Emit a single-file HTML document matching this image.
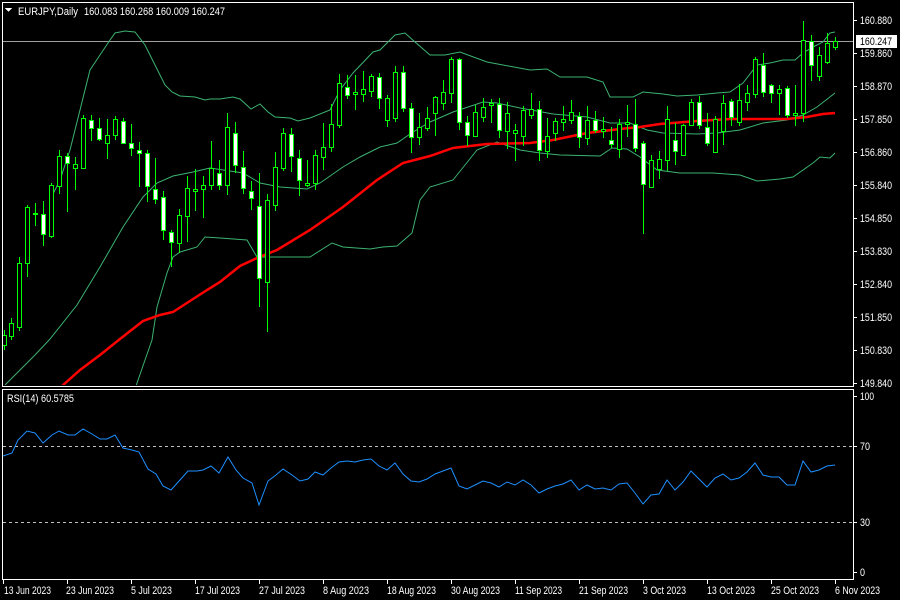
<!DOCTYPE html>
<html><head><meta charset="utf-8"><style>
html,body{margin:0;padding:0;background:#000;width:900px;height:600px;overflow:hidden}
svg{display:block}
text{font-family:"Liberation Sans",sans-serif;font-size:11px;fill:#fff}
.k line{stroke:#00ff00;stroke-width:1}
.k rect{stroke:#00ff00;stroke-width:1}
.b{fill:#000}.w{fill:#fff}
.bb{fill:none;stroke:#3cb371;stroke-width:1}
</style></head><body>
<svg width="900" height="600" viewBox="0 0 900 600" shape-rendering="crispEdges">
<defs><clipPath id="c"><rect x="3" y="3" width="850" height="382"/></clipPath>
<clipPath id="r"><rect x="3" y="390" width="850" height="188"/></clipPath></defs>
<rect x="2.5" y="2.5" width="851" height="384" fill="none" stroke="#fff"/>
<rect x="2.5" y="389.5" width="851" height="190" fill="none" stroke="#fff"/>
<g clip-path="url(#c)" shape-rendering="auto">
<line x1="3" y1="41.5" x2="853" y2="41.5" stroke="#a0a0a0"/>
<polyline class="bb" points="50,200 60,180 70,150 80,110 90,70 100,55 110,40 115,33 125,31 135,32 145,45 155,65 165,85 172,92 180,96 195,97 205,100 210,99 220,99 233,97 240,99 251,109 260,104 268,112 275,117 290,118 298,121 310,118 330,110 340,90 353,73 373,52 380,50 395,35 405,33 415,42 430,55 445,55 460,52 487,62 530,70 547,69 560,77 587,77 603,82 610,97 633,97 643,92 663,94 677,96 697,95 717,93 730,92 743,83 757,65 770,63 783,60 795,60 803,53 813,47 823,42 830,33 835,32"/>
<polyline class="bb" points="5,385 20,370 35,355 50,339 77,305 100,267 123,227 143,197 157,183 173,176 193,172 210,168 243,173 260,183 280,187 307,189 320,183 343,167 360,157 380,147 397,143 413,132 430,122 453,112 483,102 497,103 520,108 553,114 587,117 610,123 630,123 647,130 663,133 697,134 717,133 740,130 763,123 787,120 803,115 817,107 835,93"/>
<polyline class="bb" points="136,386 145,360 152,340 157,307 167,273 173,257 180,252 197,247 205,237 220,238 247,240 257,257 273,257 310,257 332,243 343,247 370,249 383,247 397,246 412,233 420,200 430,187 453,180 477,150 497,142 520,150 540,153 560,155 600,156 612,148 627,149 640,157 657,170 680,173 713,173 740,175 757,181 780,179 793,177 813,163 820,157 830,158 835,153"/>
<polyline fill="none" stroke="#ff0000" stroke-width="2.5" points="62,386 80,370 100,355 120,339 143,321 160,315 173,312 190,301 207,290 220,282 240,266 257,258 277,250 310,230 343,207 377,180 403,163 430,156 453,148 487,144 530,143 553,140 587,133 620,129 640,127 660,124 697,121 730,119 787,119 807,117 823,114 835,113"/>
</g>
<g class="k" clip-path="url(#c)">
<line x1="4.5" y1="330" x2="4.5" y2="350"/><rect x="2.5" y="335.5" width="4" height="10" class="b"/>
<line x1="11.5" y1="318" x2="11.5" y2="340"/><rect x="9.5" y="323.5" width="4" height="13" class="b"/>
<line x1="19.5" y1="257" x2="19.5" y2="331"/><rect x="17.5" y="263.5" width="4" height="64" class="b"/>
<line x1="27.5" y1="205" x2="27.5" y2="277"/><rect x="25.5" y="207.5" width="4" height="56" class="b"/>
<line x1="35.5" y1="203" x2="35.5" y2="226"/><rect x="33.5" y="213.5" width="4" height="1" class="b"/>
<line x1="43.5" y1="201" x2="43.5" y2="246"/><rect x="41.5" y="214.5" width="4" height="20" class="w"/>
<line x1="51.5" y1="183" x2="51.5" y2="238"/><rect x="49.5" y="185.5" width="4" height="51" class="b"/>
<line x1="59.5" y1="150" x2="59.5" y2="194"/><rect x="57.5" y="156.5" width="4" height="30" class="b"/>
<line x1="67.5" y1="153" x2="67.5" y2="212"/><rect x="65.5" y="156.5" width="4" height="7" class="w"/>
<line x1="75.5" y1="157" x2="75.5" y2="190"/><rect x="73.5" y="164.5" width="4" height="4" class="b"/>
<line x1="83.5" y1="115" x2="83.5" y2="168"/><rect x="81.5" y="118.5" width="4" height="50" class="b"/>
<line x1="91.5" y1="115" x2="91.5" y2="141"/><rect x="89.5" y="120.5" width="4" height="8" class="w"/>
<line x1="99.5" y1="118" x2="99.5" y2="141"/><rect x="97.5" y="128.5" width="4" height="11" class="w"/>
<line x1="107.5" y1="119" x2="107.5" y2="159"/><rect x="105.5" y="135.5" width="4" height="8" class="b"/>
<line x1="115.5" y1="116" x2="115.5" y2="140"/><rect x="113.5" y="119.5" width="4" height="16" class="b"/>
<line x1="123.5" y1="118" x2="123.5" y2="144"/><rect x="121.5" y="121.5" width="4" height="22" class="w"/>
<line x1="131.5" y1="124" x2="131.5" y2="156"/><rect x="129.5" y="143.5" width="4" height="5" class="w"/>
<line x1="139.5" y1="142" x2="139.5" y2="187"/><rect x="137.5" y="150.5" width="4" height="3" class="w"/>
<line x1="147.5" y1="150" x2="147.5" y2="202"/><rect x="145.5" y="153.5" width="4" height="33" class="w"/>
<line x1="155.5" y1="158" x2="155.5" y2="204"/><rect x="153.5" y="189.5" width="4" height="10" class="w"/>
<line x1="163.5" y1="191" x2="163.5" y2="240"/><rect x="161.5" y="197.5" width="4" height="33" class="w"/>
<line x1="171.5" y1="230" x2="171.5" y2="267"/><rect x="169.5" y="232.5" width="4" height="10" class="w"/>
<line x1="179.5" y1="209" x2="179.5" y2="253"/><rect x="177.5" y="215.5" width="4" height="28" class="b"/>
<line x1="187.5" y1="176" x2="187.5" y2="242"/><rect x="185.5" y="188.5" width="4" height="28" class="b"/>
<line x1="195.5" y1="169" x2="195.5" y2="211"/><rect x="193.5" y="189.5" width="4" height="2" class="b"/>
<line x1="203.5" y1="176" x2="203.5" y2="218"/><rect x="201.5" y="185.5" width="4" height="4" class="b"/>
<line x1="211.5" y1="141" x2="211.5" y2="190"/><rect x="209.5" y="168.5" width="4" height="17" class="b"/>
<line x1="219.5" y1="160" x2="219.5" y2="190"/><rect x="217.5" y="173.5" width="4" height="12" class="w"/>
<line x1="227.5" y1="113" x2="227.5" y2="195"/><rect x="225.5" y="127.5" width="4" height="58" class="b"/>
<line x1="235.5" y1="122" x2="235.5" y2="173"/><rect x="233.5" y="133.5" width="4" height="32" class="w"/>
<line x1="243.5" y1="151" x2="243.5" y2="194"/><rect x="241.5" y="167.5" width="4" height="21" class="w"/>
<line x1="251.5" y1="181" x2="251.5" y2="210"/><rect x="249.5" y="191.5" width="4" height="7" class="w"/>
<line x1="259.5" y1="173" x2="259.5" y2="307"/><rect x="257.5" y="206.5" width="4" height="72" class="w"/>
<line x1="267.5" y1="194" x2="267.5" y2="332"/><rect x="265.5" y="200.5" width="4" height="82" class="b"/>
<line x1="275.5" y1="152" x2="275.5" y2="211"/><rect x="273.5" y="167.5" width="4" height="38" class="b"/>
<line x1="283.5" y1="128" x2="283.5" y2="171"/><rect x="281.5" y="133.5" width="4" height="35" class="b"/>
<line x1="291.5" y1="128" x2="291.5" y2="172"/><rect x="289.5" y="134.5" width="4" height="22" class="w"/>
<line x1="299.5" y1="150" x2="299.5" y2="196"/><rect x="297.5" y="158.5" width="4" height="22" class="w"/>
<line x1="307.5" y1="160" x2="307.5" y2="187"/><rect x="305.5" y="183.5" width="4" height="2" class="b"/>
<line x1="315.5" y1="150" x2="315.5" y2="190"/><rect x="313.5" y="155.5" width="4" height="28" class="b"/>
<line x1="323.5" y1="123" x2="323.5" y2="170"/><rect x="321.5" y="147.5" width="4" height="10" class="b"/>
<line x1="331.5" y1="104" x2="331.5" y2="152"/><rect x="329.5" y="124.5" width="4" height="23" class="b"/>
<line x1="339.5" y1="74" x2="339.5" y2="128"/><rect x="337.5" y="83.5" width="4" height="42" class="b"/>
<line x1="347.5" y1="75" x2="347.5" y2="99"/><rect x="345.5" y="87.5" width="4" height="8" class="w"/>
<line x1="355.5" y1="75" x2="355.5" y2="110"/><rect x="353.5" y="92.5" width="4" height="2" class="b"/>
<line x1="363.5" y1="71" x2="363.5" y2="102"/><rect x="361.5" y="89.5" width="4" height="5" class="b"/>
<line x1="371.5" y1="74" x2="371.5" y2="97"/><rect x="369.5" y="76.5" width="4" height="15" class="b"/>
<line x1="379.5" y1="73" x2="379.5" y2="109"/><rect x="377.5" y="77.5" width="4" height="21" class="w"/>
<line x1="387.5" y1="95" x2="387.5" y2="127"/><rect x="385.5" y="98.5" width="4" height="22" class="b"/>
<line x1="395.5" y1="66" x2="395.5" y2="122"/><rect x="393.5" y="72.5" width="4" height="46" class="b"/>
<line x1="403.5" y1="66" x2="403.5" y2="112"/><rect x="401.5" y="72.5" width="4" height="36" class="w"/>
<line x1="411.5" y1="103" x2="411.5" y2="153"/><rect x="409.5" y="108.5" width="4" height="29" class="w"/>
<line x1="419.5" y1="113" x2="419.5" y2="145"/><rect x="417.5" y="127.5" width="4" height="10" class="b"/>
<line x1="427.5" y1="107" x2="427.5" y2="131"/><rect x="425.5" y="118.5" width="4" height="10" class="b"/>
<line x1="435.5" y1="96" x2="435.5" y2="136"/><rect x="433.5" y="97.5" width="4" height="16" class="b"/>
<line x1="443.5" y1="80" x2="443.5" y2="110"/><rect x="441.5" y="92.5" width="4" height="11" class="b"/>
<line x1="451.5" y1="57" x2="451.5" y2="103"/><rect x="449.5" y="59.5" width="4" height="34" class="b"/>
<line x1="459.5" y1="58" x2="459.5" y2="130"/><rect x="457.5" y="59.5" width="4" height="63" class="w"/>
<line x1="467.5" y1="116" x2="467.5" y2="146"/><rect x="465.5" y="122.5" width="4" height="13" class="w"/>
<line x1="475.5" y1="105" x2="475.5" y2="137"/><rect x="473.5" y="112.5" width="4" height="24" class="b"/>
<line x1="483.5" y1="98" x2="483.5" y2="122"/><rect x="481.5" y="107.5" width="4" height="10" class="b"/>
<line x1="491.5" y1="99" x2="491.5" y2="123"/><rect x="489.5" y="103.5" width="4" height="2" class="b"/>
<line x1="499.5" y1="98" x2="499.5" y2="138"/><rect x="497.5" y="104.5" width="4" height="26" class="w"/>
<line x1="507.5" y1="102" x2="507.5" y2="149"/><rect x="505.5" y="113.5" width="4" height="18" class="b"/>
<line x1="515.5" y1="124" x2="515.5" y2="161"/><rect x="513.5" y="130.5" width="4" height="3" class="b"/>
<line x1="523.5" y1="106" x2="523.5" y2="146"/><rect x="521.5" y="110.5" width="4" height="26" class="b"/>
<line x1="531.5" y1="93" x2="531.5" y2="119"/><rect x="529.5" y="109.5" width="4" height="6" class="b"/>
<line x1="539.5" y1="101" x2="539.5" y2="161"/><rect x="537.5" y="109.5" width="4" height="41" class="w"/>
<line x1="547.5" y1="118" x2="547.5" y2="158"/><rect x="545.5" y="136.5" width="4" height="15" class="b"/>
<line x1="555.5" y1="118" x2="555.5" y2="141"/><rect x="553.5" y="121.5" width="4" height="12" class="b"/>
<line x1="563.5" y1="106" x2="563.5" y2="131"/><rect x="561.5" y="119.5" width="4" height="3" class="b"/>
<line x1="571.5" y1="100" x2="571.5" y2="124"/><rect x="569.5" y="112.5" width="4" height="8" class="b"/>
<line x1="579.5" y1="112" x2="579.5" y2="148"/><rect x="577.5" y="116.5" width="4" height="21" class="w"/>
<line x1="587.5" y1="106" x2="587.5" y2="145"/><rect x="585.5" y="120.5" width="4" height="18" class="b"/>
<line x1="595.5" y1="111" x2="595.5" y2="133"/><rect x="593.5" y="120.5" width="4" height="10" class="w"/>
<line x1="603.5" y1="117" x2="603.5" y2="138"/><rect x="601.5" y="129.5" width="4" height="2" class="b"/>
<line x1="611.5" y1="127" x2="611.5" y2="148"/><rect x="609.5" y="140.5" width="4" height="4" class="w"/>
<line x1="619.5" y1="119" x2="619.5" y2="158"/><rect x="617.5" y="124.5" width="4" height="25" class="b"/>
<line x1="627.5" y1="105" x2="627.5" y2="137"/><rect x="625.5" y="122.5" width="4" height="2" class="b"/>
<line x1="635.5" y1="99" x2="635.5" y2="152"/><rect x="633.5" y="124.5" width="4" height="24" class="w"/>
<line x1="643.5" y1="141" x2="643.5" y2="234"/><rect x="641.5" y="143.5" width="4" height="41" class="w"/>
<line x1="651.5" y1="155" x2="651.5" y2="187"/><rect x="649.5" y="160.5" width="4" height="27" class="b"/>
<line x1="659.5" y1="151" x2="659.5" y2="179"/><rect x="657.5" y="159.5" width="4" height="10" class="b"/>
<line x1="667.5" y1="106" x2="667.5" y2="171"/><rect x="665.5" y="119.5" width="4" height="41" class="b"/>
<line x1="675.5" y1="123" x2="675.5" y2="165"/><rect x="673.5" y="140.5" width="4" height="11" class="w"/>
<line x1="683.5" y1="124" x2="683.5" y2="156"/><rect x="681.5" y="125.5" width="4" height="30" class="b"/>
<line x1="691.5" y1="99" x2="691.5" y2="126"/><rect x="689.5" y="102.5" width="4" height="23" class="b"/>
<line x1="699.5" y1="96" x2="699.5" y2="129"/><rect x="697.5" y="102.5" width="4" height="23" class="w"/>
<line x1="707.5" y1="113" x2="707.5" y2="146"/><rect x="705.5" y="127.5" width="4" height="16" class="w"/>
<line x1="715.5" y1="116" x2="715.5" y2="153"/><rect x="713.5" y="119.5" width="4" height="33" class="b"/>
<line x1="723.5" y1="95" x2="723.5" y2="145"/><rect x="721.5" y="103.5" width="4" height="28" class="b"/>
<line x1="731.5" y1="99" x2="731.5" y2="126"/><rect x="729.5" y="101.5" width="4" height="16" class="w"/>
<line x1="739.5" y1="84" x2="739.5" y2="126"/><rect x="737.5" y="100.5" width="4" height="22" class="b"/>
<line x1="747.5" y1="85" x2="747.5" y2="111"/><rect x="745.5" y="93.5" width="4" height="9" class="b"/>
<line x1="755.5" y1="57" x2="755.5" y2="98"/><rect x="753.5" y="59.5" width="4" height="35" class="b"/>
<line x1="763.5" y1="53" x2="763.5" y2="97"/><rect x="761.5" y="65.5" width="4" height="27" class="w"/>
<line x1="771.5" y1="84" x2="771.5" y2="103"/><rect x="769.5" y="85.5" width="4" height="8" class="w"/>
<line x1="779.5" y1="85" x2="779.5" y2="115"/><rect x="777.5" y="89.5" width="4" height="4" class="b"/>
<line x1="787.5" y1="86" x2="787.5" y2="118"/><rect x="785.5" y="88.5" width="4" height="27" class="w"/>
<line x1="795.5" y1="85" x2="795.5" y2="126"/><rect x="793.5" y="113.5" width="4" height="2" class="b"/>
<line x1="803.5" y1="21" x2="803.5" y2="122"/><rect x="801.5" y="40.5" width="4" height="73" class="b"/>
<line x1="811.5" y1="35" x2="811.5" y2="81"/><rect x="809.5" y="41.5" width="4" height="24" class="w"/>
<line x1="819.5" y1="47" x2="819.5" y2="81"/><rect x="817.5" y="55.5" width="4" height="21" class="b"/>
<line x1="827.5" y1="33" x2="827.5" y2="64"/><rect x="825.5" y="43.5" width="4" height="19" class="b"/>
<line x1="835.5" y1="37" x2="835.5" y2="50"/><rect x="833.5" y="41.5" width="4" height="6" class="b"/>
</g>
<polygon points="5,8 12,8 8.5,12" fill="#fff"/>
<text x="18" y="15" textLength="60" lengthAdjust="spacingAndGlyphs">EURJPY,Daily</text>
<text x="84" y="15" textLength="141" lengthAdjust="spacingAndGlyphs">160.083 160.268 160.009 160.247</text>
<g>
<text x="860" y="24" textLength="32" lengthAdjust="spacingAndGlyphs">160.880</text>
<text x="860" y="57" textLength="32" lengthAdjust="spacingAndGlyphs">159.860</text>
<text x="860" y="90" textLength="32" lengthAdjust="spacingAndGlyphs">158.870</text>
<text x="860" y="123" textLength="32" lengthAdjust="spacingAndGlyphs">157.850</text>
<text x="860" y="156" textLength="32" lengthAdjust="spacingAndGlyphs">156.860</text>
<text x="860" y="189" textLength="32" lengthAdjust="spacingAndGlyphs">155.840</text>
<text x="860" y="222" textLength="32" lengthAdjust="spacingAndGlyphs">154.850</text>
<text x="860" y="255" textLength="32" lengthAdjust="spacingAndGlyphs">153.830</text>
<text x="860" y="288" textLength="32" lengthAdjust="spacingAndGlyphs">152.840</text>
<text x="860" y="321" textLength="32" lengthAdjust="spacingAndGlyphs">151.850</text>
<text x="860" y="354" textLength="32" lengthAdjust="spacingAndGlyphs">150.830</text>
<text x="860" y="387" textLength="32" lengthAdjust="spacingAndGlyphs">149.840</text>
</g>
<rect x="856" y="35" width="41" height="13" fill="#fff"/>
<text x="860" y="45" textLength="32" lengthAdjust="spacingAndGlyphs" style="fill:#000">160.247</text>
<g stroke="#fff">
<line x1="854" y1="20.5" x2="857" y2="20.5"/><line x1="854" y1="53.5" x2="857" y2="53.5"/><line x1="854" y1="86.5" x2="857" y2="86.5"/><line x1="854" y1="119.5" x2="857" y2="119.5"/><line x1="854" y1="152.5" x2="857" y2="152.5"/><line x1="854" y1="185.5" x2="857" y2="185.5"/><line x1="854" y1="218.5" x2="857" y2="218.5"/><line x1="854" y1="251.5" x2="857" y2="251.5"/><line x1="854" y1="284.5" x2="857" y2="284.5"/><line x1="854" y1="317.5" x2="857" y2="317.5"/><line x1="854" y1="350.5" x2="857" y2="350.5"/><line x1="854" y1="383.5" x2="857" y2="383.5"/>
<line x1="854" y1="396.5" x2="857" y2="396.5"/><line x1="854" y1="446.5" x2="857" y2="446.5"/><line x1="854" y1="522.5" x2="857" y2="522.5"/><line x1="854" y1="572.5" x2="857" y2="572.5"/>
</g>
<text x="7" y="402" textLength="67" lengthAdjust="spacingAndGlyphs">RSI(14) 60.5785</text>
<line x1="3" y1="446.5" x2="853" y2="446.5" stroke="#c0c0c0" stroke-dasharray="3,3"/>
<line x1="3" y1="522.5" x2="853" y2="522.5" stroke="#c0c0c0" stroke-dasharray="3,3"/>
<g clip-path="url(#r)" shape-rendering="auto">
<polyline fill="none" stroke="#1e90ff" stroke-width="1" points="3,456 12,453 18,440 27,431 35,433 43,443 52,435 59,431 68,435 75,435 83,429 92,434 100,439 107,439 115,435 123,448 132,450 139,452 148,469 156,474 163,486 171,490 180,480 188,471 197,471 203,470 211,466 219,473 228,457 236,470 243,478 252,483 259,505 268,481 276,475 283,469 292,475 300,481 308,479 315,472 323,475 331,468 339,462 347,461 355,462 363,460 371,459 379,466 387,470 395,463 403,474 411,481 419,482 427,479 435,474 443,471 451,468 459,486 467,489 475,485 483,481 491,483 499,487 507,482 515,485 523,480 531,485 539,493 547,489 555,486 563,484 571,480 579,490 587,485 595,489 603,488 611,490 619,484 627,483 635,493 643,504 651,495 659,494 667,480 675,490 683,482 691,471 699,479 707,487 715,478 723,474 731,480 739,478 747,472 755,463 763,475 771,477 779,477 787,485 795,485 803,461 811,472 819,470 827,466 835,465"/>
</g>
<text x="860" y="400" textLength="14" lengthAdjust="spacingAndGlyphs">100</text>
<text x="860" y="450" textLength="10" lengthAdjust="spacingAndGlyphs">70</text>
<text x="860" y="526" textLength="10" lengthAdjust="spacingAndGlyphs">30</text>
<text x="860" y="576" textLength="5" lengthAdjust="spacingAndGlyphs">0</text>
<g stroke="#fff">
<line x1="3.5" y1="580" x2="3.5" y2="584"/><line x1="67.5" y1="580" x2="67.5" y2="584"/><line x1="131.5" y1="580" x2="131.5" y2="584"/><line x1="195.5" y1="580" x2="195.5" y2="584"/><line x1="259.5" y1="580" x2="259.5" y2="584"/><line x1="323.5" y1="580" x2="323.5" y2="584"/><line x1="387.5" y1="580" x2="387.5" y2="584"/><line x1="451.5" y1="580" x2="451.5" y2="584"/><line x1="515.5" y1="580" x2="515.5" y2="584"/><line x1="579.5" y1="580" x2="579.5" y2="584"/><line x1="643.5" y1="580" x2="643.5" y2="584"/><line x1="707.5" y1="580" x2="707.5" y2="584"/><line x1="771.5" y1="580" x2="771.5" y2="584"/><line x1="835.5" y1="580" x2="835.5" y2="584"/>
</g>
<g>
<text x="4" y="594" textLength="47" lengthAdjust="spacingAndGlyphs">13 Jun 2023</text>
<text x="66" y="594" textLength="48" lengthAdjust="spacingAndGlyphs">23 Jun 2023</text>
<text x="131" y="594" textLength="41" lengthAdjust="spacingAndGlyphs">5 Jul 2023</text>
<text x="195" y="594" textLength="45" lengthAdjust="spacingAndGlyphs">17 Jul 2023</text>
<text x="259" y="594" textLength="46" lengthAdjust="spacingAndGlyphs">27 Jul 2023</text>
<text x="323" y="594" textLength="46" lengthAdjust="spacingAndGlyphs">8 Aug 2023</text>
<text x="387" y="594" textLength="49" lengthAdjust="spacingAndGlyphs">18 Aug 2023</text>
<text x="451" y="594" textLength="49" lengthAdjust="spacingAndGlyphs">30 Aug 2023</text>
<text x="515" y="594" textLength="47" lengthAdjust="spacingAndGlyphs">11 Sep 2023</text>
<text x="579" y="594" textLength="49" lengthAdjust="spacingAndGlyphs">21 Sep 2023</text>
<text x="643" y="594" textLength="43" lengthAdjust="spacingAndGlyphs">3 Oct 2023</text>
<text x="707" y="594" textLength="48" lengthAdjust="spacingAndGlyphs">13 Oct 2023</text>
<text x="771" y="594" textLength="48" lengthAdjust="spacingAndGlyphs">25 Oct 2023</text>
<text x="835" y="594" textLength="45" lengthAdjust="spacingAndGlyphs">6 Nov 2023</text>
</g>
</svg>
</body></html>
